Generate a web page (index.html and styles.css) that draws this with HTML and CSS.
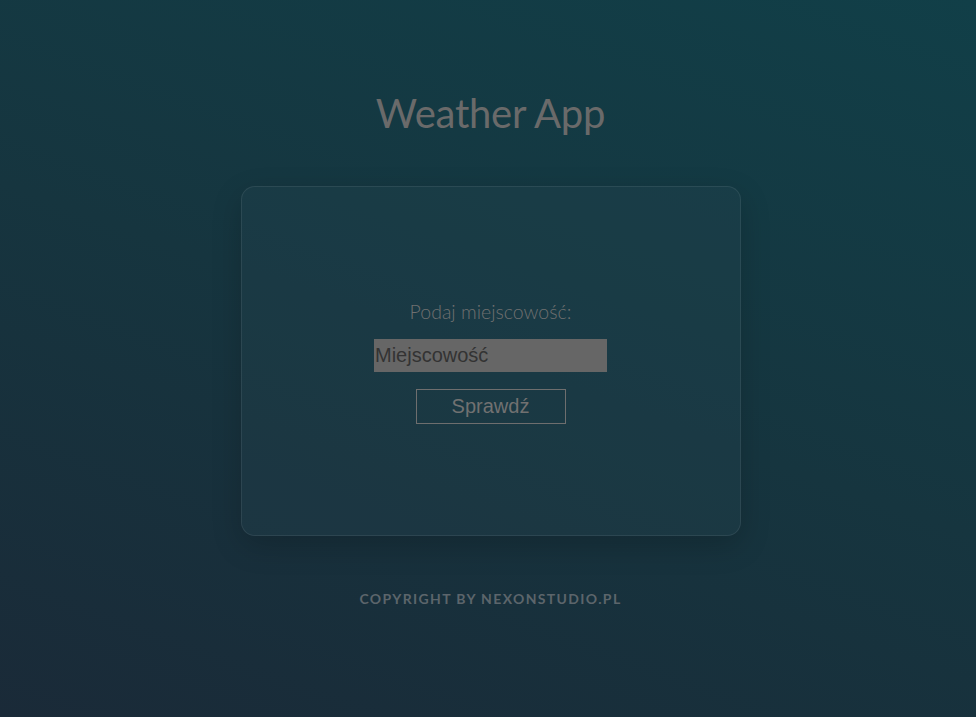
FILE: index.html
```html
<!DOCTYPE html>
<html lang="pl">
<head>
<meta charset="utf-8">
<title>Weather App</title>
<link rel="stylesheet" href="styles.css">
</head>
<body>
<main class="page">
  <h1 class="title">Weather App</h1>
  <section class="card">
    <form class="form">
      <label class="label" for="city">Podaj miejscowość:</label>
      <input class="input" id="city" type="text" placeholder="Miejscowość">
      <button class="btn" type="button">Sprawdź</button>
    </form>
  </section>
  <footer class="footer">Copyright by nexonstudio.pl</footer>
</main>
</body>
</html>
```

FILE: styles.css
```css
html, body {
  margin: 0;
  height: 100%;
}
body {
  background: linear-gradient(200deg, #113f48 0%, #16353f 50%, #1a2a38 100%);
  font-family: "Lato", "Liberation Sans", sans-serif;
  overflow: hidden;
}
.page {
  display: flex;
  flex-direction: column;
  align-items: center;
  padding-left: 5px;
  padding-top: 88px;
}
.title {
  margin: 0;
  font-weight: 400;
  font-size: 40px;
  line-height: 50px;
  color: #6a6a6a;
  letter-spacing: -0.25px;
}
.card {
  margin-top: 48px;
  width: 498px;
  height: 348px;
  border: 1px solid rgba(255, 255, 255, 0.08);
  border-radius: 14px;
  background: rgba(40, 70, 85, 0.25);
  box-shadow: 0 10px 30px rgba(0, 0, 0, 0.18);
  display: flex;
  align-items: center;
  justify-content: center;
}
.form {
  display: flex;
  flex-direction: column;
  align-items: center;
  padding-top: 2px;
}
.label {
  font-weight: 300;
  font-size: 19.5px;
  color: #707070;
  line-height: 24px;
}
.input {
  margin-top: 15px;
  width: 233px;
  height: 33px;
  box-sizing: border-box;
  border: none;
  padding: 0 1px;
  background: #666666;
  font-family: "Liberation Sans", sans-serif;
  font-size: 20px;
  color: #333;
  outline: none;
}
.input::placeholder {
  color: #333333;
  opacity: 1;
}
.btn {
  margin-top: 17px;
  width: 150px;
  height: 35px;
  box-sizing: border-box;
  border: 1px solid #6e6e6e;
  background: transparent;
  font-family: "Liberation Sans", sans-serif;
  font-size: 20px;
  color: #717171;
  padding: 0;
}
.footer {
  margin-top: 54px;
  font-weight: 700;
  font-size: 14px;
  letter-spacing: 1.35px;
  text-transform: uppercase;
  color: #5c656b;
}
```
